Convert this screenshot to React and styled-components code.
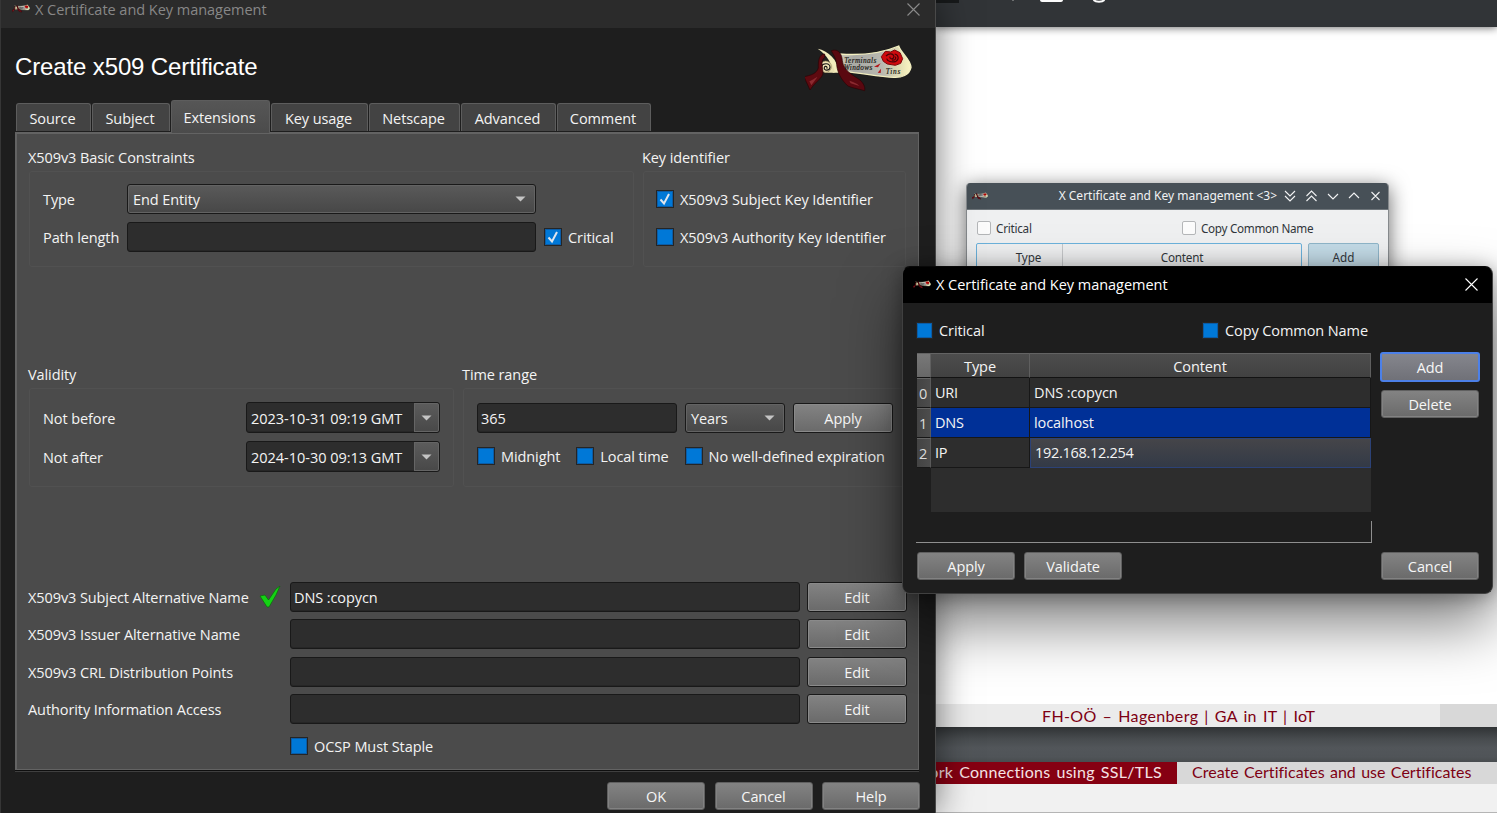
import React from 'react';
import styled, { createGlobalStyle, css } from 'styled-components';

const Global = createGlobalStyle`
  * { box-sizing: border-box; }
  html, body { margin: 0; padding: 0; }
  body { overflow: hidden; background: #fff; }
`;

const ui = `"Open Sans", "Noto Sans", sans-serif`;

const Desktop = styled.div`
  position: relative;
  width: 1497px;
  height: 813px;
  overflow: hidden;
  background: #fff;
  font: 14.5px/20px ${ui};
  color: #f4f4f4;
`;

const Text = styled.span`
  white-space: pre;
  letter-spacing: ${p => p.$track ?? -0.09}px;
  word-spacing: ${p => p.$words || 0}px;
`;

/* ---------- document viewer behind the windows ---------- */
const Viewer = styled.div`
  position: absolute;
  left: 935px;
  top: 0;
  width: 562px;
  height: 813px;
  display: flex;
  flex-direction: column;
  font-family: Lato, sans-serif;
  font-size: 16px;
  color: #7d0013;
`;
const ViewerBar = styled.div`
  height: 27px;
  flex: none;
  background: #313437;
  box-shadow: 0 1px 8px rgba(0, 0, 0, 0.55);
  svg { display: block; }
`;
const Slide = styled.div`flex: 1;`;
const SlideFooter = styled.div`
  display: grid;
  grid-template-columns: 505px 1fr;
  height: 23px;
  background: #d8d8d8;
`;
const FooterCell = styled.div`
  display: flex;
  align-items: center;
  padding-left: 107px;
  background: #ebebeb;
`;
const PageGap = styled.div`
  height: 35px;
  background: linear-gradient(#303335, #484c4f 35%, #52565a 60%, #505458 85%, #484c4f);
`;
const SlideHeader = styled.div`
  display: grid;
  grid-template-columns: 242px 1fr;
  height: 22px;
  line-height: 19px;
`;
const HeaderSection = styled.div`
  display: flex;
  justify-content: ${p => (p.$active ? 'flex-end' : 'flex-start')};
  padding: 0 15px;
  color: ${p => (p.$active ? '#f5e3e5' : '#7d0013')};
  background: ${p => (p.$active ? '#860012' : '#d8d8d8')};
`;
const NextSlide = styled.div`
  height: 29px;
  background: #f1f1f1;
  border-bottom: 1px solid #b5b5b5;
`;

/* ---------- light window ---------- */
const LightWindow = styled.div`
  position: absolute;
  left: 966px;
  top: 183px;
  width: 423px;
  height: 200px;
  border-radius: 4px 4px 0 0;
  background: #eff0f1;
  border: 1px solid #868a8d;
  border-top: 0;
  overflow: hidden;
  font: 11.7px/16px "Noto Sans", sans-serif;
  color: #31363b;
`;
const LightShadow = styled.div`
  position: absolute;
  left: 966px;
  top: 183px;
  width: 423px;
  height: 200px;
  border-radius: 4px;
  box-shadow: 0 4px 20px rgba(0, 0, 0, 0.6);
`;
const LightTitle = styled.div`
  display: flex;
  align-items: center;
  height: 27px;
  padding: 0 6px 0 5px;
  background: #475057;
  color: #f1f2f3;
  font-size: 12px;
  border-bottom: 1px solid #6e757a;
  > span { margin-left: auto; margin-right: 7px; }
`;
const LightControls = styled.svg`display: block; fill: none; stroke: #f1f2f3; stroke-width: 1.1;`;
const LightChecks = styled.div`
  display: grid;
  grid-template-columns: 205px 1fr;
  padding: 10px 0 0 10px;
`;
const LightCheck = styled.label`
  display: flex;
  align-items: center;
  gap: 5px;
  height: 15px;
  i { width: 14px; height: 14px; border: 1px solid #b5b7b9; border-radius: 2px; background: #fcfcfc; }
`;
const LightTable = styled.div`
  display: grid;
  grid-template-columns: 326px 71px;
  gap: 6px;
  padding: 8px 9px;
  height: 120px;
`;
const LightHead = styled.div`
  display: grid;
  grid-template-columns: 86px 1fr;
  border: 1px solid #6cb2dc;
  border-radius: 2px;
  > * { padding-top: 5px; text-align: center; }
  > :first-child { padding-left: 18px; border-right: 1px solid #c6c8ca; }
`;
const LightAdd = styled.div`
  border: 1px solid #8fb5c9;
  border-radius: 2px;
  background: #c3dbe7;
  padding-top: 5px;
  text-align: center;
`;

/* ---------- shared dark controls ---------- */
const Button = styled.button`
  display: flex;
  align-items: center;
  justify-content: center;
  width: ${p => p.$w || 100}px;
  height: ${p => p.$h || 30}px;
  padding: 1px 0 0;
  font: 14.5px/20px ${ui};
  letter-spacing: -0.09px;
  color: #f6f6f6;
  border: 1px solid ${p => (p.$flat ? '#606060' : '#191919')};
  border-radius: 3px;
  background: linear-gradient(#838383, #6a6a6a);
  box-shadow: inset 0 0 0 1px ${p => (p.$flat ? '#828282' : '#8a8a8a')};
  ${p => p.$focus && css`
    border: 2px solid #4c80e8;
    background: linear-gradient(#85868d, #707178);
    box-shadow: none;
  `}
`;
const Input = styled.div`
  display: flex;
  align-items: center;
  width: ${p => p.$w}px;
  height: ${p => p.$h || 30}px;
  padding-left: ${p => p.$inset || 3}px;
  border: 1px solid #191919;
  border-radius: 3px;
  background: #2d2d2d;
  box-shadow: inset 0 -1px #262626;
  overflow: hidden;
  > span { padding-top: 2px; }
`;
const Select = styled.div`
  display: flex;
  align-items: center;
  justify-content: space-between;
  width: ${p => p.$w}px;
  height: 30px;
  padding: 0 9px 0 5px;
  border: 1px solid #191919;
  border-radius: 3px;
  background: linear-gradient(#5a5a5a, #474747);
  box-shadow: inset 0 0 0 1px #636363;
  > span { padding-top: 2px; }
`;
const Drop = styled.div`
  display: flex;
  align-items: center;
  justify-content: center;
  width: 25px;
  height: 29px;
  margin-left: auto;
  background: linear-gradient(#5c5c5c, #484848);
  box-shadow: inset 0 0 0 1px #656565;
  border-radius: 0 2px 2px 0;
`;
const Arrow = () => (
  <svg width="11" height="6"><path d="M0.5 0.5h10L5.5 5.5z" fill="#c4c4c4" /></svg>
);
const CheckRow = styled.label`
  display: flex;
  align-items: center;
  gap: 6px;
  height: 18px;
  > span:last-child { padding-top: 2px; }
`;
const Box = styled.span`
  display: flex;
  flex: none;
  width: ${p => p.$size || 18}px;
  height: ${p => p.$size || 18}px;
  border: 1px solid #252525;
  box-shadow: inset 0 0 0 1px #0b5ca6;
  background: #0078d7;
  svg { margin: 0 auto; }
`;
const Check = ({ on, label, size }) => (
  <CheckRow>
    <Box $size={size}>
      {on && <svg width="16" height="16"><path d="M3.500 8.500L7 12.500L12 3" fill="none" stroke="#dfe6ee" strokeWidth="2" /></svg>}
    </Box>
    <Text>{label}</Text>
  </CheckRow>
);
const Scroll = ({ width, height }) => (
  <svg width={width} height={height} viewBox="15 12 324 144">
    <defs>
      <linearGradient id="parchment" x1="0" y1="0" x2="1" y2="0">
        <stop offset="0" stopColor="#cfcdb8" /><stop offset=".2" stopColor="#a9a9a4" />
        <stop offset=".6" stopColor="#b9b9b0" /><stop offset=".85" stopColor="#e4e0b4" />
        <stop offset="1" stopColor="#fbf6c4" />
      </linearGradient>
    </defs>
    <path d="M118 42C170 46 240 42 296 18C302 38 332 58 333 82C328 106 304 113 282 112C234 110 180 98 134 95z" fill="url(#parchment)" stroke="#f3efc0" strokeWidth="4" />
    <path d="M53 26C84 32 112 58 120 98L98 98C96 70 82 46 53 26z" fill="#f3ecbc" />
    <path d="M66 68C80 62 100 62 104 98L74 98z" fill="#e9dfb0" />
    <circle cx="77" cy="80" r="17" fill="#f4e7b8" stroke="#8b7c52" strokeWidth="2" />
    <path d="M64 80C68 68 90 68 90 82C88 94 70 92 73 82C76 76 84 80 80 86" fill="none" stroke="#171717" strokeWidth="3.500" />
    <path d="M74 42C58 42 54 62 55 84C50 100 34 106 12 110L30 150C44 128 62 118 68 104C72 84 58 66 74 52z" fill="#5e0a10" stroke="#2a0305" strokeWidth="2" />
    <path d="M94 32C116 24 126 44 127 62C130 92 160 106 180 120C190 130 196 140 194 152C172 146 156 144 144 138C124 120 112 98 110 74C108 54 100 44 94 32z" fill="#5a0810" stroke="#2a0305" strokeWidth="2" />
    <path d="M28 124C40 120 46 112 52 112L34 136zM148 122C160 126 172 130 178 138L152 130z" fill="#8c2a30" />
    <path d="M244 50L256 34L272 36L284 30L300 38L308 56L302 70L286 76L262 72L250 64z" fill="#d00a0e" stroke="#7a0609" strokeWidth="3" />
    <path d="M258 48C268 38 280 40 282 50C280 60 268 58 270 50M284 42C296 44 298 58 288 64C274 68 262 64 260 56M276 60C284 62 290 56 286 50" fill="none" stroke="#4a0307" strokeWidth="3.500" />
    <path d="M222 80L242 70L234 82zM233 98L243 86L242 99z" fill="#b3151a" />
    <g fontFamily="'Liberation Serif', serif" fontStyle="italic" fontSize="22" fill="#1b1a16" stroke="#1b1a16" strokeWidth=".5">
      <text x="133" y="69" textLength="96">Terminals</text>
      <text x="131" y="91" textLength="86">Windows</text>
      <text x="257" y="102" textLength="44">Tins</text>
    </g>
  </svg>
);
const Close = ({ color }) => (
  <svg width="13" height="13"><path d="M0.5 0.5L12.5 12.5M12.5 0.5L0.5 12.5" stroke={color} strokeWidth="1.1" /></svg>
);

/* ---------- main certificate window ---------- */
const MainWindow = styled.div`
  position: absolute;
  left: 0;
  top: 0;
  width: 936px;
  height: 813px;
  border-left: 1px solid #363636;
  border-right: 1px solid #494949;
  background: #1e1e1e;
  box-shadow: 0 0 34px rgba(0, 0, 0, 0.55);
`;
const MainTitle = styled.div`
  display: flex;
  align-items: flex-start;
  height: 28px;
  padding-left: 11px;
  background: #2b2b2b;
  color: #878787;
  > svg:first-child { margin: 4px 5px 0 0; }
  > svg:last-child { margin: 3px 15px 0 auto; }
`;
const Header = styled.div`
  display: flex;
  justify-content: space-between;
  height: 72px;
  padding: 16px 22px 0 14px;
`;
const Heading = styled.h1`
  margin: 8px 0 0;
  font: 24px/30px "Liberation Sans", sans-serif;
  letter-spacing: -0.13px;
  color: #fff;
`;
const Tabs = styled.div`
  display: flex;
  align-items: flex-end;
  gap: 1px;
  height: 32px;
  padding-left: 15px;
`;
const Tab = styled.div`
  display: flex;
  align-items: center;
  justify-content: center;
  width: ${p => p.$w}px;
  height: ${p => (p.$on ? 33 : 28)}px;
  margin-bottom: ${p => (p.$on ? -1 : 1)}px;
  padding: 2px 2px 0 0;
  border: 1px solid #5d5d5d;
  border-bottom: 0;
  border-radius: 3px 3px 0 0;
  background: ${p => (p.$on ? 'linear-gradient(#565656, #4b4b4b)' : '#434343')};
  z-index: ${p => (p.$on ? 1 : 0)};
`;
const Pane = styled.div`
  width: 904px;
  height: 638px;
  margin-left: 14px;
  padding: 14px 10px 0 12px;
  border: 2px solid #636363;
  border-right-width: 1px;
  border-bottom-width: 1px;
  background: #4b4b4b;
  box-shadow: 0 1px #0f0f0f, 0 2px #3f3f3f;
`;
const Columns = styled.div`
  display: flex;
  gap: 9px;
  height: ${p => p.$h}px;
`;
const Group = styled.section`
  width: ${p => p.$w}px;
  flex: none;
  > header { height: 23px; margin-left: -1px; }
`;
const Frame = styled.div`
  height: ${p => p.$h}px;
  padding: ${p => p.$pad};
  margin-left: ${p => p.$shift ?? 1}px;
  border: 1px solid #515151;
  border-radius: 3px;
  display: grid;
  align-content: start;
  row-gap: 8px;
`;
const Row = styled.div`
  display: flex;
  align-items: center;
  height: ${p => p.$h || 30}px;
  gap: ${p => p.$gap || 8}px;
`;
const Caption = styled.div`
  width: ${p => p.$w}px;
  flex: none;
  display: flex;
  align-items: center;
  > span { padding-top: 2px; }
  svg { margin-left: 10px; }
`;
const Extensions = styled.div`
  display: grid;
  grid-template-rows: 37px 38px 37px 37px 18px;
  margin-left: -1px;
`;
const Indent = styled.div`padding-left: 262px; margin-top: 6px;`;
const ExtensionRow = styled(Row)`
  gap: 7px;
  > :first-child { margin-right: 2px; }
`;
const Actions = styled.div`
  display: flex;
  justify-content: flex-end;
  gap: 9.5px;
  padding: 12px 15px 0 0;
`;

/* ---------- names dialog ---------- */
const Dialog = styled.div`
  position: absolute;
  left: 902px;
  top: 266px;
  width: 591px;
  height: 328px;
  border-radius: 8px;
  overflow: hidden;
  background: #1e1e1e;
  border: 1px solid #404040;
  border-top-color: #080808;
`;
const DialogShadow = styled.div`
  position: absolute;
  left: 902px;
  top: 266px;
  width: 591px;
  height: 328px;
  border-radius: 8px;
  box-shadow: 0 30px 60px rgba(0, 0, 0, 0.5), 0 2px 20px rgba(0, 0, 0, 0.35);
`;
const DialogTitle = styled.div`
  display: flex;
  align-items: center;
  height: 36px;
  margin-left: -1px;
  padding: 0 14px 2px 11px;
  background: #000;
  color: #fff;
  > span { padding-top: 2px; }
  > svg:first-child { margin-right: 5px; }
  > svg:last-child { margin-left: auto; }
`;
const DialogChecks = styled.div`
  display: grid;
  grid-template-columns: 286px 1fr;
  height: 49px;
  padding: 18px 13px 0;
`;
const DialogMain = styled.div`
  display: grid;
  grid-template-columns: 456px 100px;
  gap: 8px;
  height: 191px;
  padding-left: 13px;
`;
const TableArea = styled.div`
  height: 191px;
  padding: 1px 0 0 1px;
  background:
    linear-gradient(#8f8f8f, #8f8f8f) right bottom / 1px 22px no-repeat,
    linear-gradient(#8f8f8f, #8f8f8f) left bottom / 100% 1px no-repeat;
`;
const Table = styled.div`
  display: grid;
  grid-template-columns: 14px 99px 341px;
  grid-template-rows: 25px 30px 30px 30px 44px;
  width: 454px;
`;
const Th = styled.div`
  display: flex;
  align-items: center;
  justify-content: center;
  padding-top: 2px;
  border-right: 1px solid #5f5f5f;
  border-top: 1px solid #636363;
  border-bottom: 1px solid #131313;
  background: ${p => (p.$corner ? 'linear-gradient(#787878, #686868)' : 'linear-gradient(#4d4d4d, #414141)')};
`;
const Index = styled.div`
  display: flex;
  align-items: center;
  padding: 2px 0 0 2px;
  color: #dcdcdc;
  background: linear-gradient(90deg, #434343, #4c4c4c);
  border-right: 1px solid #5a5a5a;
  border-top: 1px solid #646464;
  border-bottom: 1px solid #171717;
`;
const Td = styled.div`
  display: flex;
  align-items: center;
  padding: 0 0 0 4px;
  border-right: 1px solid #171717;
  border-bottom: 1px solid #171717;
  background: ${p => (p.$on ? '#003097' : '#2d2d2d')};
  ${p => p.$edit && css`
    border: 1px solid #2c4277;
    background: linear-gradient(#454549, #333a47);
  `}
`;
const Empty = styled.div`grid-column: 2 / 4; background: #2d2d2d;`;
const SideButtons = styled.div`
  display: flex;
  flex-direction: column;
  align-items: center;
  gap: 8px;
`;
const DialogActions = styled.div`
  display: flex;
  gap: 9px;
  padding: 9px 13px 0 14px;
  > :last-child { margin-left: auto; }
`;

const tabs = [
  ['Source', 75], ['Subject', 78], ['Extensions', 99], ['Key usage', 97],
  ['Netscape', 91], ['Advanced', 95], ['Comment', 94],
];
const extensions = [
  ['X509v3 Subject Alternative Name', 'DNS :copycn', true],
  ['X509v3 Issuer Alternative Name', ''],
  ['X509v3 CRL Distribution Points', ''],
  ['Authority Information Access', ''],
];
const names = [['URI', 'DNS :copycn'], ['DNS', 'localhost'], ['IP', '192.168.12.254']];
const dates = [['Not before', '2023-10-31 09:19 GMT'], ['Not after', '2024-10-30 09:13 GMT']];

const Background = () => (
  <>
    <Viewer>
      <ViewerBar>
        <svg width="300" height="27">
          <path d="M0 0h24v3H0z" fill="#17191a" />
          <path d="M78 0V1" stroke="#aaa" />
          <path d="M105 0h23c0 1-1 2-2 2h-19c-1 0-2-1-2-2z" fill="#fcfcfc" />
          <path d="M158.500 0C161 2.300 167 2.300 169.500 0" fill="none" stroke="#fcfcfc" strokeWidth="2" />
        </svg>
      </ViewerBar>
      <Slide />
      <SlideFooter><FooterCell><Text $track={0.35} $words={1.6}>FH-OÖ – Hagenberg | GA in IT | IoT</Text></FooterCell></SlideFooter>
      <PageGap />
      <SlideHeader>
        <HeaderSection $active><Text $track={0.3} $words={1.5}>ork Connections using SSL/TLS</Text></HeaderSection>
        <HeaderSection><Text $track={0.02} $words={1.2}>Create Certificates and use Certificates</Text></HeaderSection>
      </SlideHeader>
      <NextSlide />
    </Viewer>
    <LightShadow />
    <LightWindow>
      <LightTitle>
        <Scroll width={16} height={8} />
        <Text $track={0}>{'X Certificate and Key management <3>'}</Text>
        <LightControls width="98" height="12">
          <path d="M1 1L6 6L11 1M1 6L6 11L11 6M22.500 6L27.500 1L32.500 6M22.500 11L27.500 6L32.500 11M44 4L49 9L54 4M65 8L70 3L75 8M87.500 2L95.500 10M95.500 2L87.500 10" />
        </LightControls>
      </LightTitle>
      <LightChecks>
        <LightCheck><i /><Text $track={-0.25}>Critical</Text></LightCheck>
        <LightCheck><i /><Text $track={-0.3}>Copy Common Name</Text></LightCheck>
      </LightChecks>
      <LightTable>
        <LightHead><Text>Type</Text><Text $track={-0.2}>Content</Text></LightHead>
        <LightAdd>Add</LightAdd>
      </LightTable>
    </LightWindow>
  </>
);

const CertificateWindow = () => (
  <MainWindow>
    <MainTitle>
      <Scroll width={18} height={9} />
      <Text $track={-0.03}>X Certificate and Key management</Text>
      <Close color="#8b8b8b" />
    </MainTitle>
    <Header>
      <Heading>Create x509 Certificate</Heading>
      <Scroll width={108} height={48} />
    </Header>
    <Tabs>
      {tabs.map(([t, w]) => <Tab key={t} $w={w} $on={t === 'Extensions'}><Text>{t}</Text></Tab>)}
    </Tabs>
    <Pane>
      <Columns $h={217}>
        <Group $w={605}>
          <header><Text>X509v3 Basic Constraints</Text></header>
          <Frame $h={96} $shift={0} $pad="12px 0 0 13px">
            <Row><Caption $w={76}><Text>Type</Text></Caption><Select $w={409}><Text>End Entity</Text><Arrow /></Select></Row>
            <Row><Caption $w={76}><Text>Path length</Text></Caption><Input $w={409} /><Check on label="Critical" /></Row>
          </Frame>
        </Group>
        <Group $w={263}>
          <header><Text>Key identifier</Text></header>
          <Frame $h={96} $shift={0} $pad="12px 0 0 12px">
            <Row><Check on label="X509v3 Subject Key Identifier" /></Row>
            <Row><Check label="X509v3 Authority Key Identifier" /></Row>
          </Frame>
        </Group>
      </Columns>
      <Columns $h={217}>
        <Group $w={425}>
          <header><Text>Validity</Text></header>
          <Frame $h={99} $shift={0} $pad="13px 0 0 13px">
            {dates.map(([label, value]) => (
              <Row key={label} $h={31}>
                <Caption $w={195}><Text>{label}</Text></Caption>
                <Input $w={194} $h={31} $inset={4}><Text $track={-0.02}>{value}</Text><Drop><Arrow /></Drop></Input>
              </Row>
            ))}
          </Frame>
        </Group>
        <Group $w={443}>
          <header><Text>Time range</Text></header>
          <Frame $h={99} $shift={0} $pad="14px 0 0 13px">
            <Row><Input $w={200}><Text>365</Text></Input><Select $w={100}><Text>Years</Text><Arrow /></Select><Button>Apply</Button></Row>
            <Row $gap={16}><Check label="Midnight" /><Check label="Local time" /><Check label="No well-defined expiration" /></Row>
          </Frame>
        </Group>
      </Columns>
      <Extensions>
        {extensions.map(([label, value, ok]) => (
          <ExtensionRow key={label}>
            <Caption $w={253}>
              <Text>{label}</Text>
              {ok && (
                <svg width="22" height="24">
                  <path d="M1 11L6 10L9.500 15L17 4L21 1L17 10L10 22H8z" fill="#14d214" stroke="#0b6a0b" strokeWidth=".7" />
                </svg>
              )}
            </Caption>
            <Input $w={510}><Text>{value}</Text></Input>
            <Button>Edit</Button>
          </ExtensionRow>
        ))}
        <Indent><Check label="OCSP Must Staple" /></Indent>
      </Extensions>
    </Pane>
    <Actions>
      <Button $flat $w={98} $h={28}>OK</Button>
      <Button $flat $w={98} $h={28}>Cancel</Button>
      <Button $flat $w={98} $h={28}>Help</Button>
    </Actions>
  </MainWindow>
);

const NamesDialog = () => (
  <>
    <DialogShadow />
    <Dialog>
      <DialogTitle>
        <Scroll width={18} height={9} />
        <Text $track={-0.03}>X Certificate and Key management</Text>
        <Close color="#fff" />
      </DialogTitle>
      <DialogChecks>
        <Check size={17} label="Critical" />
        <Check size={17} label="Copy Common Name" />
      </DialogChecks>
      <DialogMain>
        <TableArea>
          <Table>
            <Th $corner /><Th><Text>Type</Text></Th><Th><Text>Content</Text></Th>
            {names.map(([type, content], i) => (
              <React.Fragment key={type}>
                <Index>{i}</Index>
                <Td $on={i === 1}><Text $track={-0.25}>{type}</Text></Td>
                <Td $on={i === 1} $edit={i === 2}><Text $track={i === 2 ? -0.3 : -0.09}>{content}</Text></Td>
              </React.Fragment>
            ))}
            <Empty />
          </Table>
        </TableArea>
        <SideButtons>
          <Button $focus>Add</Button>
          <Button $flat $w={98} $h={28}>Delete</Button>
        </SideButtons>
      </DialogMain>
      <DialogActions>
        <Button $flat $w={98} $h={28}>Apply</Button>
        <Button $flat $w={98} $h={28}>Validate</Button>
        <Button $flat $w={98} $h={28}>Cancel</Button>
      </DialogActions>
    </Dialog>
  </>
);

export default function App() {
  return (
    <Desktop>
      <Global />
      <Background />
      <CertificateWindow />
      <NamesDialog />
    </Desktop>
  );
}
